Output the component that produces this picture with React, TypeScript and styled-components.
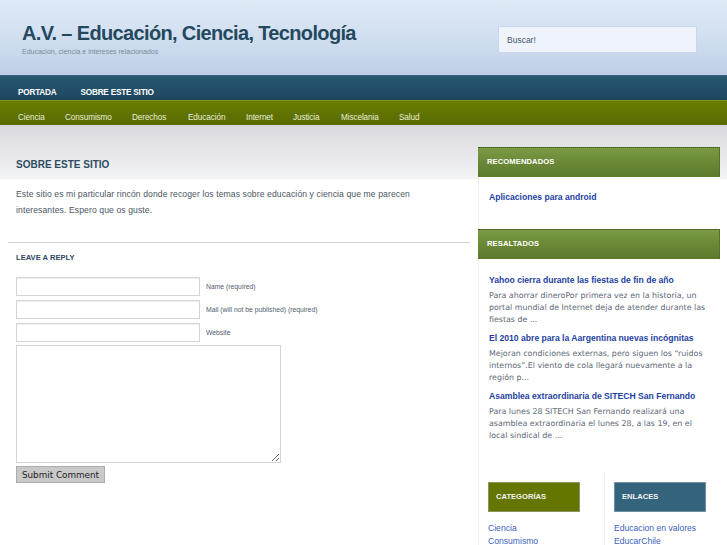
import React from 'react';
import styled, { createGlobalStyle } from 'styled-components';

const GlobalStyle = createGlobalStyle`
	html, body {
		margin: 0;
		padding: 0;
		background: #fff;
	}
	body {
		font-family: 'Liberation Sans', Arial, sans-serif;
		width: 727px;
		height: 545px;
		overflow: hidden;
	}
`;

const Header = styled.header`
	height: 75px;
	display: flex;
	justify-content: space-between;
	align-items: flex-start;
	padding: 0 30px 0 22px;
	background: linear-gradient(to bottom, #e0eaf7 0%, #d3e0f1 45%, #bfcfe6 100%);
	box-sizing: border-box;
`;

const Brand = styled.div`
	padding-top: 21px;
`;

const SiteTitle = styled.h1`
	margin: 0;
	font-size: 20px;
	font-weight: bold;
	color: #24495e;
	line-height: 24px;
	letter-spacing: -0.65px;
`;

const Tagline = styled.div`
	margin-top: 3px;
	font-size: 7px;
	color: #7c8b99;
`;

const SearchBox = styled.input`
	margin-top: 26px;
	width: 199px;
	height: 27px;
	box-sizing: border-box;
	border: 1px solid #c6d6ec;
	background: #eff4fb;
	padding: 0 8px;
	font-family: 'Liberation Sans', Arial, sans-serif;
	font-size: 8.5px;
	color: #45596a;
	outline: none;
	&::placeholder {
		color: #45596a;
	}
`;

const NavBar = styled.nav<{ $tone: 'blue' | 'green' }>`
	height: 25px;
	display: flex;
	align-items: center;
	padding: 8px 0 0 18px;
	box-sizing: border-box;
	gap: ${p => (p.$tone === 'blue' ? '24px' : '0')};
	border-top: 1px solid ${p => (p.$tone === 'blue' ? '#3d6580' : '#7f9418')};
	background: ${p =>
		p.$tone === 'blue'
			? 'linear-gradient(to bottom, #295870 0%, #1d4760 100%)'
			: 'linear-gradient(to bottom, #687d00 0%, #586a00 100%)'};
`;

const NavItem = styled.a<{ $bold?: boolean }>`
	color: #fff;
	text-decoration: none;
	font-size: 8.2px;
	font-weight: ${p => (p.$bold ? 'bold' : 'normal')};
	letter-spacing: ${p => (p.$bold ? '-0.2px' : '-0.1px')};
	white-space: nowrap;
`;

const CatItem = styled(NavItem)<{ $w: number }>`
	width: ${p => p.$w}px;
	color: #e8edd8;
`;

const Body = styled.div`
	display: flex;
	align-items: flex-start;
	padding-left: 8px;
	background: linear-gradient(to bottom, #d9d9df 0px, #f3f4f6 54px, #fff 55px) no-repeat;
`;

const MainColumn = styled.main`
	width: 462px;
	flex-shrink: 0;
`;

const PageHead = styled.div`
	height: 55px;
	box-sizing: border-box;
	padding: 34px 0 0 8px;
`;

const PageTitle = styled.h2`
	margin: 0;
	font-size: 10px;
	font-weight: bold;
	color: #2e4d62;
	line-height: 12px;
`;

const Paragraph = styled.p`
	margin: 0;
	padding: 6px 8px 0;
	max-width: 412px;
	font-size: 8.6px;
	letter-spacing: 0.1px;
	line-height: 16px;
	color: #4a5662;
`;

const Divider = styled.hr`
	margin: 24px 0 0;
	border: 0;
	border-top: 1px solid #d2d2d2;
`;

const ReplyTitle = styled.h3`
	margin: 10px 0 0 8px;
	font-size: 7.6px;
	font-weight: bold;
	color: #2e4a5f;
	line-height: 10px;
`;

const Form = styled.form`
	margin: 14px 0 0 8px;
	display: flex;
	flex-direction: column;
	gap: 4px;
`;

const FieldRow = styled.div`
	display: flex;
	align-items: center;
	gap: 6px;
`;

const TextInput = styled.input`
	width: 184px;
	height: 19px;
	box-sizing: border-box;
	border: 1px solid #d4d4d4;
	box-shadow: inset 0 1px 1px #eee;
	margin: 0;
`;

const FieldLabel = styled.label`
	font-size: 6.8px;
	color: #4f6070;
`;

const Comment = styled.textarea`
	display: block;
	width: 265px;
	height: 118px;
	box-sizing: border-box;
	border: 1px solid #d4d4d4;
	margin: -1px 0 0;
`;

const SubmitButton = styled.button`
	display: block;
	width: 89px;
	height: 17px;
	padding: 0;
	margin-top: -1px;
	font-family: 'DejaVu Sans', sans-serif;
	font-size: 8.8px;
	color: #222;
	background: #c9c9c9;
	border: 1px solid #adadad;
	border-radius: 0;
`;

const Sidebar = styled.aside`
	width: 242px;
	flex-shrink: 0;
	margin-left: 8px;
	padding-top: 22px;
`;

const WidgetHead = styled.div`
	height: 30px;
	box-sizing: border-box;
	padding: 9px 0 0 9px;
	border-top: 1px dotted #3f5a1d;
	border-right: 1px solid #56702a;
	background: linear-gradient(to bottom, #7c9b45 0%, #6a8836 50%, #5c7a2c 100%);
	font-size: 7.6px;
	font-weight: bold;
	color: #fff;
	letter-spacing: 0.1px;
`;

const WidgetBody = styled.div<{ $h: number; $top: number }>`
	height: ${p => p.$h}px;
	box-sizing: border-box;
	border-left: 1px solid #eee;
	padding: ${p => p.$top}px 0 0 10px;
	background: #fff;
`;

const StrongLink = styled.a`
	display: block;
	font-size: 8.6px;
	font-weight: bold;
	color: #1e3fa0;
	text-decoration: none;
	line-height: 12px;
	white-space: nowrap;
`;

const PostItem = styled.div`
	margin-bottom: 6px;
`;

const PostExcerpt = styled.div`
	margin-top: 4px;
	font-family: 'DejaVu Sans', sans-serif;
	font-size: 7.9px;
	line-height: 12px;
	color: #5d6976;
	padding-right: 8px;
`;

const Columns = styled.div`
	display: flex;
`;

const Column = styled.div<{ $w?: number }>`
	${p => (p.$w ? `width: ${p.$w}px;` : 'flex: 1;')}
	border-left: 1px solid #eee;
	padding: 10px 0 0 9px;
	box-sizing: border-box;
`;

const BoxHead = styled.div<{ $bg: string; $border: string }>`
	width: 92px;
	height: 30px;
	box-sizing: border-box;
	padding: 9px 0 0 7px;
	background: ${p => p.$bg};
	border: 1px solid ${p => p.$border};
	font-size: 7.6px;
	font-weight: bold;
	color: #f2f2f2;
	margin-bottom: 10px;
`;

const ListLink = styled.a`
	display: block;
	font-size: 8.6px;
	line-height: 13px;
	color: #3c5fbf;
	text-decoration: none;
	white-space: nowrap;
`;

const categories: [string, number][] = [
	['Ciencia', 47],
	['Consumismo', 67],
	['Derechos', 56],
	['Educación', 58],
	['Internet', 47],
	['Justicia', 48],
	['Miscelania', 58],
	['Salud', 40],
];

const posts = [
	{
		title: 'Yahoo cierra durante las fiestas de fin de año',
		text: 'Para ahorrar dineroPor primera vez en la historia, un portal mundial de Internet deja de atender durante las fiestas de ...',
	},
	{
		title: 'El 2010 abre para la Aargentina nuevas incógnitas',
		text: 'Mejoran condiciones externas, pero siguen los “ruidos internos”.El viento de cola llegará nuevamente a la región p...',
	},
	{
		title: 'Asamblea extraordinaria de SITECH San Fernando',
		text: 'Para lunes 28 SITECH San Fernando realizará una asamblea extraordinaria el lunes 28, a las 19, en el local sindical de ...',
	},
];

export default function App() {
	return (
		<>
			<GlobalStyle />
			<Header>
				<Brand>
					<SiteTitle>A.V. – Educación, Ciencia, Tecnología</SiteTitle>
					<Tagline>Educación, ciencia e intereses relacionados</Tagline>
				</Brand>
				<SearchBox placeholder="Buscar!" />
			</Header>

			<NavBar $tone="blue">
				<NavItem $bold>PORTADA</NavItem>
				<NavItem $bold>SOBRE ESTE SITIO</NavItem>
			</NavBar>
			<NavBar $tone="green">
				{categories.map(([name, w]) => (
					<CatItem key={name} $w={w}>
						{name}
					</CatItem>
				))}
			</NavBar>

			<Body>
				<MainColumn>
					<PageHead>
						<PageTitle>SOBRE ESTE SITIO</PageTitle>
					</PageHead>
					<Paragraph>
						Este sitio es mi particular rincón donde recoger los temas sobre educación y ciencia que me parecen
						interesantes. Espero que os guste.
					</Paragraph>
					<Divider />
					<ReplyTitle>LEAVE A REPLY</ReplyTitle>
					<Form onSubmit={e => e.preventDefault()}>
						<FieldRow>
							<TextInput id="author" />
							<FieldLabel htmlFor="author">Name (required)</FieldLabel>
						</FieldRow>
						<FieldRow>
							<TextInput id="email" />
							<FieldLabel htmlFor="email">Mail (will not be published) (required)</FieldLabel>
						</FieldRow>
						<FieldRow>
							<TextInput id="url" />
							<FieldLabel htmlFor="url">Website</FieldLabel>
						</FieldRow>
						<Comment />
						<SubmitButton type="submit">Submit Comment</SubmitButton>
					</Form>
				</MainColumn>

				<Sidebar>
					<WidgetHead>RECOMENDADOS</WidgetHead>
					<WidgetBody $h={52} $top={14}>
						<StrongLink>Aplicaciones para android</StrongLink>
					</WidgetBody>
					<WidgetHead>RESALTADOS</WidgetHead>
					<WidgetBody $h={213} $top={15}>
						{posts.map(p => (
							<PostItem key={p.title}>
								<StrongLink>{p.title}</StrongLink>
								<PostExcerpt>{p.text}</PostExcerpt>
							</PostItem>
						))}
					</WidgetBody>
					<Columns>
						<Column $w={126}>
							<BoxHead $bg="#647600" $border="#8a9560">
								CATEGORÍAS
							</BoxHead>
							<ListLink>Ciencia</ListLink>
							<ListLink>Consumismo</ListLink>
						</Column>
						<Column>
							<BoxHead $bg="#34637c" $border="#6f8ea0">
								ENLACES
							</BoxHead>
							<ListLink>Educacion en valores</ListLink>
							<ListLink>EducarChile</ListLink>
						</Column>
					</Columns>
				</Sidebar>
			</Body>
		</>
	);
}
